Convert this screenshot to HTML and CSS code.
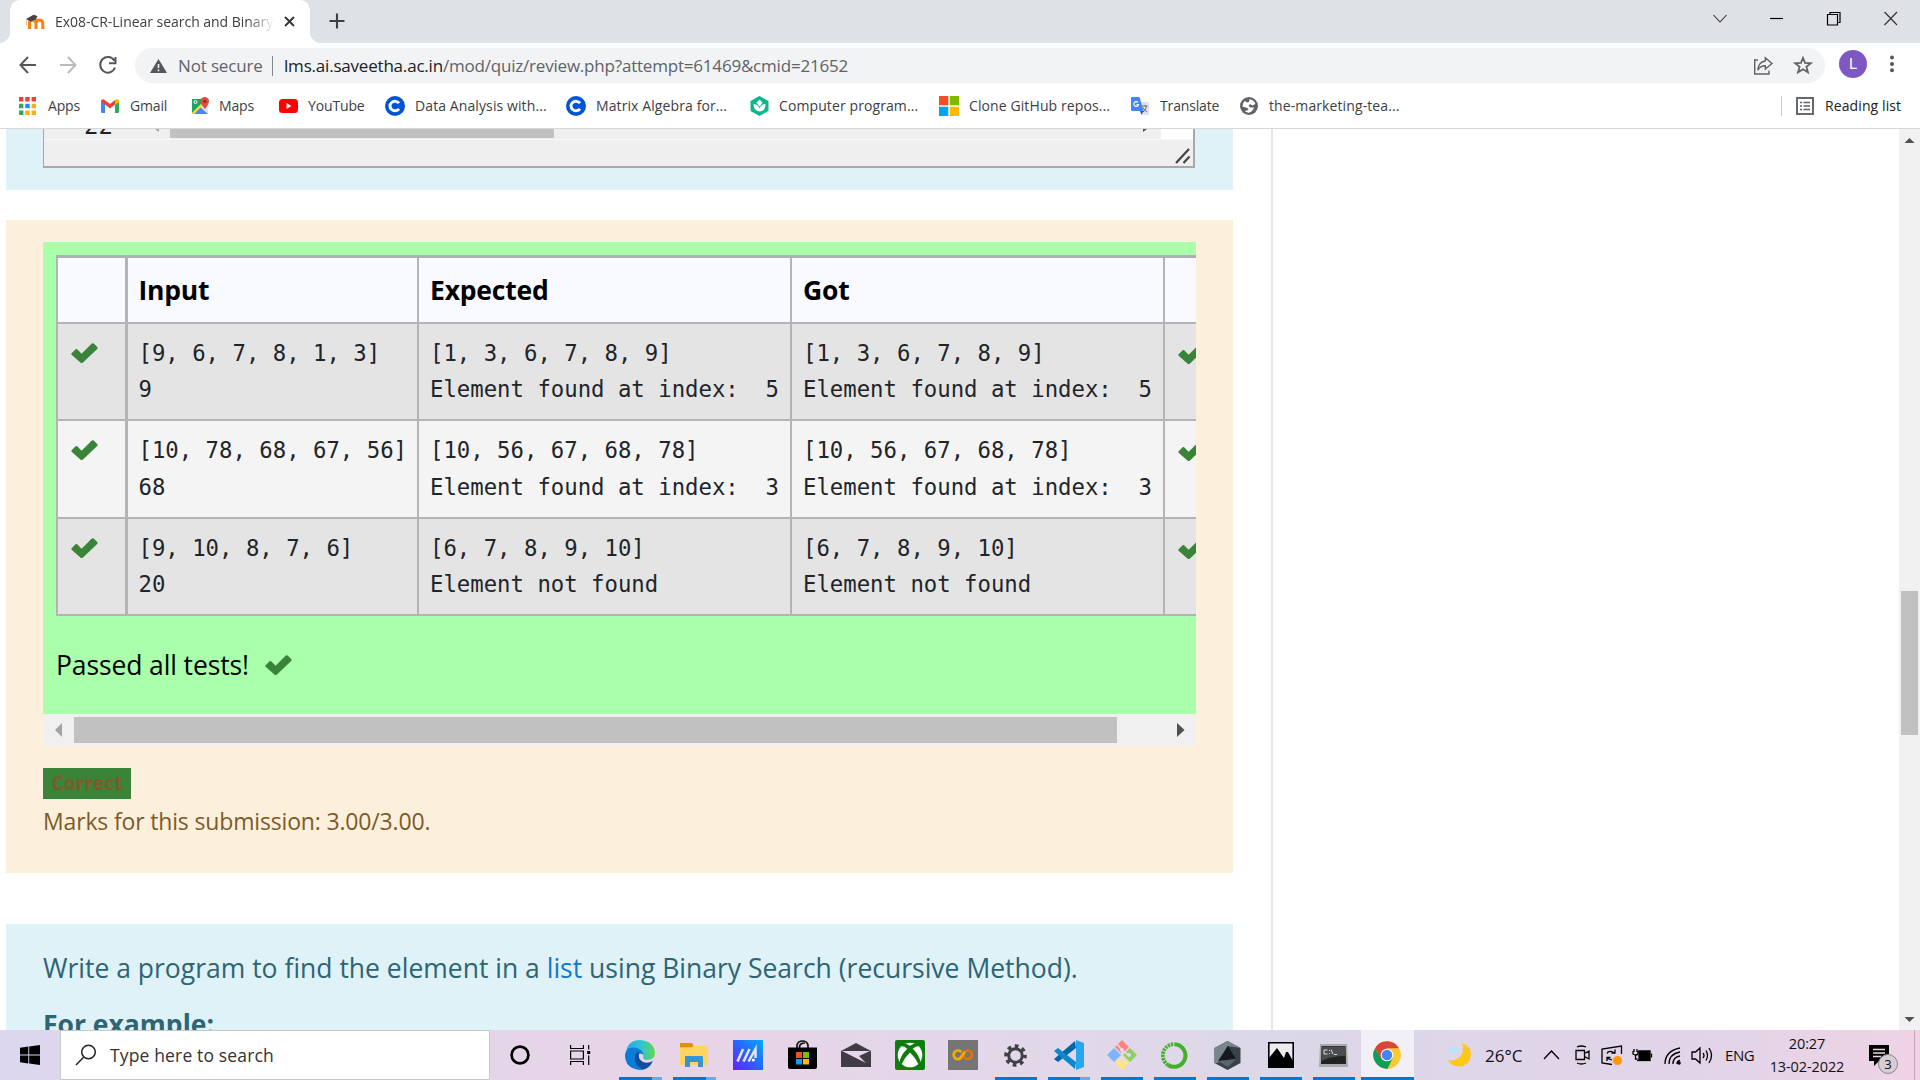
FILE: index.html
```html
<!DOCTYPE html>
<html lang="en">
<head>
<meta charset="utf-8">
<title>Ex08-CR-Linear search and Binary</title>
<link rel="stylesheet" href="styles.css">
</head>
<body>
<svg class="defs" aria-hidden="true">
  <symbol id="check" viewBox="0 0 27 20"><path d="M0.6 10.2 L4.6 6.2 Q5.4 5.6 6.2 6.3 L10.6 10.8 L20.8 0.6 Q21.8-.2 22.7.6 L26.2 4 Q27 5 26.2 5.9 L12 19.4 Q10.6 20.5 9.4 19.4 L.6 11.8 Q0 11 .6 10.2Z" fill="#398439"/></symbol>
  <symbol id="coursera" viewBox="0 0 20 20"><circle cx="10" cy="10" r="10" fill="#0056d2"/><path d="M14 7.2A5 4.7 0 1 0 14 12.8" fill="none" stroke="#fff" stroke-width="2.9"/></symbol>
</svg>

<header class="tabstrip">
  <div class="tab">
    <svg class="favicon" width="20" height="16" viewBox="0 0 20 16"><path d="M4.5 15V9Q4.5 6 7.5 6T11 9V15M11 9Q11 6 14.2 6T17.8 9V15" fill="none" stroke="#f98012" stroke-width="3"/><path d="M1 5 8.5.8 12.5 2 11 5.5 5.5 7.5Z" fill="#444"/><path d="M1.5 5V11" stroke="#f7b98a"/></svg>
    <span class="tab-title">Ex08-CR-Linear search and Binary</span>
    <svg class="tab-close" width="11" height="11" viewBox="0 0 11 11"><path d="M1 1 10 10M10 1 1 10" stroke="#333639" stroke-width="1.9"/></svg>
  </div>
  <svg class="newtab" width="16" height="16" viewBox="0 0 16 16"><path d="M8 .5V15.5M.5 8H15.5" stroke="#3c4043" stroke-width="2.1"/></svg>
  <div class="winbtns">
    <svg width="56" height="36"><path d="M21.5 15 28 22 34.5 15" fill="none" stroke="#333" stroke-width="1.1"/></svg>
    <svg width="57" height="36"><path d="M22 18.5H35" stroke="#000" stroke-width="1.2"/></svg>
    <svg width="57" height="36"><path d="M22.5 14.5H32.5V25H22.5ZM25 14V12.5H35V22.5H33" fill="none" stroke="#000" stroke-width="1.2"/></svg>
    <svg width="57" height="36"><path d="M22.5 12 35 25M35 12 22.5 25" stroke="#333" stroke-width="1.2"/></svg>
  </div>
</header>

<nav class="toolbar">
  <svg width="135" height="42" viewBox="0 0 135 42" fill="none" stroke-width="2">
    <path d="M36 22H20.5M28 14 20.5 22 28 30" stroke="#54585d"/>
    <path d="M60 22H75.5M68 14 75.5 22 68 30" stroke="#b9bbbd"/>
    <path d="M114.5 18A7.6 7.8 0 1 0 115 24.5M115.5 14V20.2H109" stroke="#54585d"/>
  </svg>
  <div class="omnibox">
    <svg class="warn" width="17" height="14" viewBox="0 0 17 14"><path d="M8.5 0 17 14H0Z" fill="#54585d"/><path d="M8.5 5V9M8.5 10.4V12.2" stroke="#f1f3f4" stroke-width="1.6"/></svg>
    <span class="notsecure">Not secure</span>
    <span class="omnisep"></span>
    <span class="url"><b>lms.ai.saveetha.ac.in</b>/mod/quiz/review.php?attempt=61469&amp;cmid=21652</span>
    <svg class="omni-icons" width="72" height="35" viewBox="0 0 72 35" fill="none" stroke="#5f6368">
      <path d="M5 12H1.7V26H16V22.5" stroke-width="1.4"/><path d="M12.3 9.8 19 15.5 12.3 21V17.8Q7 17.8 4.8 22.3 5.2 14 12.3 13Z" stroke-width="1.4"/>
      <path d="M50 9.8 52.1 15 57.8 15.3 53.4 18.8 54.9 24.3 50 21.2 45.1 24.3 46.6 18.8 42.2 15.3 47.9 15Z" stroke-width="1.8"/>
    </svg>
  </div>
  <span class="avatar">L</span>
  <svg class="kebab" width="6" height="18" viewBox="0 0 6 18" fill="#54585d"><circle cx="3" cy="2.6" r="2"/><circle cx="3" cy="9" r="2"/><circle cx="3" cy="15.2" r="2"/></svg>
</nav>

<nav class="bookmarks">
  <a class="bm bm-apps"><svg width="17" height="18" viewBox="0 0 17 18"><path d="M0 0h4.4v4.4H0zM6.3 0h4.4v4.4H6.3zM12.6 0H17v4.4h-4.4z" fill="#ea4335"/><path d="M0 6.8h4.4v4.4H0zM0 13.6h4.4V18H0z" fill="#34a853"/><path d="M6.3 6.8h4.4v4.4H6.3z" fill="#1a8cff"/><path d="M12.6 6.8H17v4.4h-4.4zM6.3 13.6h4.4V18H6.3zM12.6 13.6H17V18h-4.4z" fill="#fbb005"/></svg><span>Apps</span></a>
  <a class="bm bm-gmail"><svg width="18" height="14" viewBox="0 0 18 14"><path d="M0 2.5 4 5V14H1Q0 14 0 13Z" fill="#4285f4"/><path d="M18 2.5 14 5V14H17Q18 14 18 13Z" fill="#34a853"/><path d="M0 2.5Q.2-.6 3 .4L9 5 14 1V5.4L9 9.4 4 5.5 0 3Z" fill="#ea4335"/><path d="M14 1Q17.5-1.4 18 2.2V3L14 6Z" fill="#fbbc04"/></svg><span>Gmail</span></a>
  <a class="bm bm-maps"><svg width="18" height="18" viewBox="0 0 18 18"><path d="M1 2H11L17 8V17H1Z" fill="#dfe3e6"/><path d="M1 2H11L10 8 1 17Z" fill="#1ea362"/><path d="M9 10 17 17H3Z" fill="#4a89f3"/><path d="M1.5 17 11 7.5" stroke="#fdd835" stroke-width="2.4"/><path d="M14 12Q9.5 7 9.5 4.3A4 4 0 0 1 18 4.3Q18 7 14 12Z" fill="#e04a3f"/><circle cx="13.8" cy="4.2" r="1.5" fill="#8c2922"/><circle cx="4.5" cy="5" r="1.5" fill="none" stroke="#fff"/></svg><span>Maps</span></a>
  <a class="bm bm-yt"><svg width="19" height="14" viewBox="0 0 19 14"><rect width="19" height="14" rx="3.5" fill="#f00"/><path d="M7.5 4 12.5 7 7.5 10Z" fill="#fff"/></svg><span>YouTube</span></a>
  <a class="bm wide bm-data"><svg width="20" height="20"><use href="#coursera"/></svg><span>Data Analysis with...</span></a>
  <a class="bm wide bm-matrix"><svg width="20" height="20"><use href="#coursera"/></svg><span>Matrix Algebra for...</span></a>
  <a class="bm wide bm-comp"><svg width="19" height="20" viewBox="0 0 19 20"><path d="M9.5 0 18.5 5V15L9.5 20 .5 15V5Z" fill="#0fb58d"/><path d="M9.5 3.5 12.5 6.8 9.5 10.5 6.5 6.8ZM3.5 8Q8.5 8.3 9.5 12.5 10.5 8.3 15.5 8 15.5 15 9.5 15.5 3.5 15 3.5 8Z" fill="#fff"/></svg><span>Computer program...</span></a>
  <a class="bm wide bm-clone"><svg width="20" height="20" viewBox="0 0 20 20"><path d="M0 0h9.3v9.3H0z" fill="#f25022"/><path d="M10.7 0H20v9.3h-9.3z" fill="#7fba00"/><path d="M0 10.7h9.3V20H0z" fill="#00a4ef"/><path d="M10.7 10.7H20V20h-9.3z" fill="#ffb900"/></svg><span>Clone GitHub repos...</span></a>
  <a class="bm bm-trans"><svg width="18" height="18" viewBox="0 0 18 18"><path d="M7 5H17Q18 5 18 6V17Q18 18 17 18H10Z" fill="#dfe1e5"/><path d="M11 9H16.5M14 8V9M12 15Q15 13 15.5 9M12 10.5Q13 13.5 16 15" stroke="#6b7075" fill="none"/><path d="M1 0H8.5L12.5 14H1.5Q0 14 0 13V1Q0 0 1 0Z" fill="#4285f4"/><path d="M9 14H13L10.3 17.5Z" fill="#3451b8"/><path d="M7 5.3A2.4 2.4 0 1 0 7.6 7.6H5.5" fill="none" stroke="#fff" stroke-width="1.1"/></svg><span>Translate</span></a>
  <a class="bm wide bm-mark"><svg width="18" height="18" viewBox="0 0 18 18"><circle cx="9" cy="9" r="9" fill="#5f6368"/><path d="M9.5 2.2Q14 2.6 15.4 7L12.5 8.5 10 7 8.5 9 10.5 10.5H14Q12.5 14.8 9 15.8 6.5 15.7 4.8 14L8.5 13 7.5 11 2.4 9.5Q2.3 6 5 3.8L6.5 5.5 9 5Z" fill="#fff"/></svg><span>the-marketing-tea...</span></a>
  <a class="reading"><svg width="18" height="18" viewBox="0 0 18 18"><rect x="1" y="1" width="16" height="16" fill="none" stroke="#5f6368" stroke-width="1.9"/><path d="M4 5.5H6M4 9H6M4 12.5H6M7.5 5.5H14M7.5 9H14M7.5 12.5H14" stroke="#5f6368" stroke-width="1.7"/></svg><span>Reading list</span></a>
</nav>

<main class="viewport">
  <section class="column">
    <div class="box info-top">
      <div class="editor">
        <div class="editor-row">
          <span class="lineno">22</span>
          <svg class="ed-left" width="5" height="4" viewBox="0 0 5 4"><path d="M0 0H4V3Z" fill="#a3a3a3"/></svg>
          <span class="ed-thumb"></span>
          <svg class="ed-right" width="5" height="4" viewBox="0 0 5 4"><path d="M1 0H5L1 3Z" fill="#505050"/></svg>
          <span class="ed-corner"></span>
        </div>
        <svg class="resizer" width="16" height="16" viewBox="0 0 16 16"><path d="M1 15 14 1M8.5 15 14.5 8.5" stroke="#444" stroke-width="2.2"/></svg>
      </div>
    </div>

    <div class="box outcome">
      <div class="results">
        <table class="tests">
          <colgroup><col class="c-mark"><col class="c-input"><col class="c-exp"><col class="c-got"><col class="c-mark2"></colgroup>
          <thead><tr><th></th><th>Input</th><th>Expected</th><th>Got</th><th></th></tr></thead>
          <tbody>
            <tr><td><svg class="ck" width="27" height="20"><use href="#check"/></svg></td><td><pre>[9, 6, 7, 8, 1, 3]
9</pre></td><td><pre>[1, 3, 6, 7, 8, 9]
Element found at index:  5</pre></td><td><pre>[1, 3, 6, 7, 8, 9]
Element found at index:  5</pre></td><td><svg class="ck ck-last" width="27" height="20"><use href="#check"/></svg></td></tr>
            <tr><td><svg class="ck" width="27" height="20"><use href="#check"/></svg></td><td><pre>[10, 78, 68, 67, 56]
68</pre></td><td><pre>[10, 56, 67, 68, 78]
Element found at index:  3</pre></td><td><pre>[10, 56, 67, 68, 78]
Element found at index:  3</pre></td><td><svg class="ck ck-last" width="27" height="20"><use href="#check"/></svg></td></tr>
            <tr><td><svg class="ck" width="27" height="20"><use href="#check"/></svg></td><td><pre>[9, 10, 8, 7, 6]
20</pre></td><td><pre>[6, 7, 8, 9, 10]
Element not found</pre></td><td><pre>[6, 7, 8, 9, 10]
Element not found</pre></td><td><svg class="ck ck-last" width="27" height="20"><use href="#check"/></svg></td></tr>
          </tbody>
        </table>
        <p class="passed"><span>Passed all tests!</span><svg width="27" height="20"><use href="#check"/></svg></p>
      </div>
      <div class="hscroll">
        <svg width="31" height="32"><path d="M19 9V23L12 16Z" fill="#a3a3a3"/></svg>
        <span class="hthumb"></span>
        <svg width="31" height="32"><path d="M12 9V23L19.5 16Z" fill="#505050"/></svg>
      </div>
      <span class="badge">Correct</span>
      <p class="marks">Marks for this submission: 3.00/3.00.</p>
    </div>

    <div class="box question">
      <p class="prompt">Write a program to find the element in a <a>list</a> using Binary Search (recursive Method).</p>
      <p class="example">For example:</p>
    </div>
  </section>
  <aside class="side"></aside>
  <div class="vscroll">
    <svg width="21" height="20"><path d="M5.5 14 10.5 9 15.5 14Z" fill="#505050"/></svg>
    <span class="vthumb"></span>
    <svg width="21" height="20"><path d="M5.5 7 10.5 12 15.5 7Z" fill="#505050"/></svg>
  </div>
</main>

<footer class="taskbar">
  <div class="start"><svg width="20" height="20" viewBox="0 0 20 20"><path d="M0 2.8 8.3 1.6V9.5H0ZM9.2 1.5 20 0V9.5H9.2ZM0 10.4H8.3V18.4L0 17.2ZM9.2 10.4H20V20L9.2 18.5Z"/></svg></div>
  <div class="search"><svg width="22" height="22" viewBox="0 0 22 22"><circle cx="13.5" cy="8" r="6.8" fill="none" stroke="#222" stroke-width="1.5"/><path d="M8.6 13.2 1 21" stroke="#222" stroke-width="1.5"/></svg><span>Type here to search</span></div>
  <div class="sys"><svg width="20" height="20" viewBox="0 0 20 20"><circle cx="10" cy="10" r="8.4" fill="none" stroke="#000" stroke-width="2.7"/></svg></div>
  <div class="sys sys2"><svg width="21" height="20" viewBox="0 0 21 20" fill="none" stroke="#000" stroke-width="1.2"><path d="M.6 0V3.5H13.4V0M.6 20V16.5H13.4V20M.6 6H13.4V14H.6ZM18.7 0V4.5M18.7 10.5V20"/><path d="M17.2 6H20.2V9H17.2Z" fill="#000" stroke="none"/></svg></div>

  <div class="app run two"><svg width="30" height="30" viewBox="0 0 30 30"><defs><linearGradient id="eg" x1="0" x2="1"><stop offset="0" stop-color="#28a8e8"/><stop offset=".55" stop-color="#30c5cf"/><stop offset="1" stop-color="#62d94b"/></linearGradient></defs><path d="M1 12Q3 0 15 0 29 1 30 13 30 20 22 20 18 20 18 17 20 12 14 9 7 6 1 12Z" fill="url(#eg)"/><path d="M0 15Q1 7 9 7.5 17 8 19 15 14 11 11 17 10 25 19 28 22 28.5 20 29 16 30.5 12 29.6 0 27 0 15Z" fill="#0a7cd8"/><path d="M10 16Q11 12 14.5 12 12 19 18 22 23 24 28 21 24 29 18 29.5 9 26 10 16Z" fill="#104f9c"/></svg></div>
  <div class="app run two"><svg width="28" height="24" viewBox="0 0 28 24"><path d="M0 2Q0 0 2 0H11L14 3H26Q28 3 28 5V21H0Z" fill="#f5bd3c"/><path d="M0 1Q0 0 1 0H12L13.5 2 12 4H0Z" fill="#dc9500"/><path d="M0 5H12L14 3H28V22H0Z" fill="#ffd560"/><path d="M5 24V14Q5 13 6 13H22Q23 13 23 14V24H18V19H10V24Z" fill="#3991d9"/></svg></div>
  <div class="app"><svg width="30" height="30" viewBox="0 0 30 30"><defs><linearGradient id="ag" x1="0" y1="1" x2="1" y2="0"><stop offset="0" stop-color="#6420ff"/><stop offset=".5" stop-color="#2b64ff"/><stop offset="1" stop-color="#00abff"/></linearGradient></defs><path d="M0 0H30V30H0Z" fill="url(#ag)"/><path d="M4.5 21.5 10 9M10.5 21.5 16.5 9M15.5 21.5 22.5 9V18" fill="none" stroke="#e3eaff" stroke-width="2.5"/><circle cx="20.3" cy="20" r="1.6" fill="#fff"/></svg></div>
  <div class="app"><svg width="29" height="30" viewBox="0 0 29 30"><path d="M9 8V5Q10 1 14.5 1T20 5V8M11.5 8Q11 3 17 3" fill="none" stroke="#111" stroke-width="1.7"/><path d="M0 7.5H29V27Q29 29 27 29H2Q0 29 0 27Z"/><path d="M8 12h6v6H8z" fill="#f25022"/><path d="M15 12h6v6h-6z" fill="#7fba00"/><path d="M8 19h6v5.5H8z" fill="#00a4ef"/><path d="M15 19h6v5.5h-6z" fill="#ffb900"/></svg></div>
  <div class="app"><svg width="30" height="24" viewBox="0 0 30 24"><path d="M0 8 15 0 30 8V24H0Z" fill="#403c44"/><path d="M1 8H29L18 13 25 20 13 14Z" fill="#e5d6e9"/></svg></div>
  <div class="app"><svg width="30" height="30" viewBox="0 0 30 30"><rect width="30" height="30" rx="2" fill="#107c10"/><circle cx="15" cy="15" r="12.3" fill="#fff"/><path d="M7 3.5Q11.5 3 15 5.8 18.5 3 23 3.5L24.5 6Q20.5 6 17.7 8.7 24.5 15 25.3 22L23.6 24.5Q20 17 15 12.5 10 17 6.4 24.5L4.7 22Q5.5 15 12.3 8.7 9.5 6 5.5 6Z" fill="#107c10"/></svg></div>
  <div class="app n"><svg width="30" height="30" viewBox="0 0 30 30"><path d="M0 0H30V30H0Z" fill="#757575"/><g fill="none" stroke-width="2.7"><path d="M13.2 12A4.3 4.3 0 1 0 13.2 17.6" stroke="#f9ab00"/><circle cx="19.7" cy="14.8" r="4.2" stroke="#e8710a"/><path d="M12.2 18.2 16.8 11.8" stroke="#f9ab00"/></g></svg></div>
  <div class="app n run"><svg width="23" height="23" viewBox="0 0 23 23"><circle cx="11.5" cy="11.5" r="6.8" fill="none" stroke="#414046" stroke-width="3"/><circle cx="11.5" cy="11.5" r="9.4" fill="none" stroke="#414046" stroke-width="3.8" stroke-dasharray="3.7 3.68" stroke-dashoffset="1"/></svg></div>
  <div class="app n run two"><svg width="30" height="30" viewBox="0 0 30 30"><path d="M22 8 4 22 0 19 21 1Z" fill="#0065a9"/><path d="M22 22 4 8 0 11 21 29Z" fill="#0b86cf"/><path d="M22 0 30 3V27L22 30Z" fill="#2aa5f0"/></svg></div>
  <div class="app n run"><svg width="30" height="30" viewBox="0 0 30 30"><path d="M15 0 22 7 15 14 8 7Z" fill="#ff8080"/><path d="M23 8 30 15 23 22 16 15Z" fill="#8ccf63"/><path d="M7 8 14 15 7 22 0 15Z" fill="#80b3ff"/><path d="M15 16 22 23 15 30 8 23Z" fill="#ffe680"/><path d="M10 4 15 10V22M15 11 22 15" fill="none" stroke="#e4dbe9" stroke-width="1.7"/><circle cx="15" cy="10" r="2" fill="#e4dbe9"/><circle cx="15" cy="21" r="2" fill="#e4dbe9"/><circle cx="22" cy="15" r="2" fill="#e4dbe9"/></svg></div>
  <div class="app n run"><svg width="27" height="27" viewBox="0 0 27 27" fill="none" stroke="#43b02a"><path d="M13.5 2.2A11.3 11.3 0 1 1 7 23" stroke-width="4"/><path d="M7 23A11.3 11.3 0 0 1 13.5 2.2" stroke-width="3.8" stroke-dasharray="2.3 .9"/></svg></div>
  <div class="app n run"><svg width="27" height="29" viewBox="0 0 27 29"><path d="M13.5 0 26.5 7V22L13.5 29 .5 22V7Z" fill="#39424a"/><path d="M13.5 0 26.5 7 13.5 5 4 22 .5 22V7Z" fill="#78858d"/><path d="M14 5 22 18 4 20Z" fill="#15191d"/><path d="M4 20 22 18 14 26Z" fill="#59636b"/></svg></div>
  <div class="app n run"><svg width="26" height="26" viewBox="0 0 26 26"><path d="M.8.8H25.2V25.2H.8Z" fill="#efe9f2" stroke="#000" stroke-width="1.6"/><path d="M1 16 9 6 16 16 18 10 20 10 25 19V25H1Z"/></svg></div>
  <div class="app n run"><svg width="29" height="23" viewBox="0 0 29 23"><path d="M1 0H28L29 23H0Z" fill="#aaa"/><path d="M2.5 2H26.5L27 20H2Z" fill="#202224"/><path d="M3 2.5H26L26.3 12Q12 12 2.6 17Z" fill="#4a4d50"/><path d="M8.5 6H5V10H8.5M10.5 6V7M10.5 9V10M12 5.5 14 10M15 10.5H18" fill="none" stroke="#ddd"/></svg></div>
  <div class="app n run active"><svg width="28" height="28" viewBox="0 0 28 28"><circle cx="14" cy="14" r="13.7" fill="#fcc934"/><path d="M2 7.3A13.7 13.7 0 0 1 26 7.3H14L8 17.5Z" fill="#db4437"/><path d="M2 7.3 8.2 17.5 14 20 14.8 27.6A13.7 13.7 0 0 1 2 7.3Z" fill="#0f9d58"/><path d="M20 17 14.5 27.7 10 25 15 19Z" fill="#0f9d58"/><path d="M20 17 15 27.7A13.7 13.7 0 0 0 26.5 8.5H16Z" fill="#fcc934"/><circle cx="14" cy="14" r="6.3" fill="#fff"/><circle cx="14" cy="14" r="5.2" fill="#4285f4"/></svg></div>

  <div class="tray">
    <svg class="moon" width="26" height="24" viewBox="0 0 26 24"><path d="M16 0Q25 3 25 12 24 23 13 23.5 5 23 2 17 8 18.5 13.5 14.5 19 8 16 0Z" fill="#fdc81c"/><path d="M3 10A3 3 0 0 1 4 5Q7 0 10 5 14 6 12 10Z" fill="#bfe1f7"/></svg>
    <span class="temp">26°C</span>
    <svg class="ticons" width="170" height="30" viewBox="0 0 170 30" fill="none" stroke="#000" stroke-width="1.3">
      <path d="M1 19 8.5 11 16 19"/>
      <path d="M33 10.5H41.5V19.5H33ZM41.5 13.5 46 11V19L41.5 16.5M34 7Q38 5 43 7M34 23Q38 25 43 23"/>
      <path d="M78.5 14V6L59 9V23L69 24.5M64 13.5Q65 11 68 11.5L71.5 12.8M72 9.5V13H68.5M64 21V17.5H67.5M64.5 18.5 69 20"/><circle cx="74.5" cy="20.5" r="4.5" fill="#ff9800" stroke="none"/>
      <path d="M90 11V14Q93 16 95 14V11M91 9V12M94 9V12M92.5 15V19H94.5M108.5 13.5V17.5"/><path d="M96 11H107V20H96Z" fill="#000"/><path d="M94 20.5H107.5" />
      <path d="M122 24Q122 11 137 8M126 24Q126 14 137 12M130 24Q130 17 137 16M134 24Q134 21 137 20.5"/><circle cx="136" cy="23" r="1.8" fill="#000" stroke="none"/>
      <path d="M149 12H152.5L157 8V23L152.5 19H149ZM160 13Q162 15.5 160 18M163 10.5Q166 15.5 163 20.5M166 8Q171 15.5 166 23"/>
    </svg>
    <span class="lang">ENG</span>
    <span class="clock"><span class="time">20:27</span><span class="date">13-02-2022</span></span>
    <div class="notif"><svg width="20" height="21" viewBox="0 0 20 21"><path d="M0 0H20V16H10L5 21V16H0Z"/><path d="M4 4.5H16M4 8H16M4 11.5H12" stroke="#ead5e6" stroke-width="1.3"/></svg><span class="count">3</span></div>
  </div>
</footer>
</body>
</html>
```
FILE: styles.css
```css
* { box-sizing: border-box; }
html, body { margin: 0; height: 100%; overflow: hidden; }
body {
  width: 1920px; height: 1080px;
  display: flex; flex-direction: column;
  background: #fff; color: #3c4043;
  font-family: "Segoe UI", "Open Sans", "Noto Sans", sans-serif;
}
p { margin: 0; }
svg { display: block; flex: none; }
span, p, b, a { white-space: nowrap; }
.defs { position: absolute; width: 0; height: 0; }

/* tab strip */
.tabstrip { height: 43px; flex: none; display: flex; align-items: flex-start; background: #dee1e6; padding-left: 10px; }
.tab { position: relative; width: 300px; height: 43px; padding: 0 15px; background: #fff; border-radius: 10px 10px 0 0; display: flex; align-items: center; }
.tab::before, .tab::after { content: ""; position: absolute; bottom: 0; width: 10px; height: 10px; }
.tab::before { left: -10px; background: radial-gradient(circle at 0 0, transparent 9.5px, #fff 10px); }
.tab::after { right: -10px; background: radial-gradient(circle at 100% 0, transparent 9.5px, #fff 10px); }
.tab-title { width: 219px; margin: -1px 0 0 10px; overflow: hidden; font-size: 14px; letter-spacing: -.03px; -webkit-mask-image: linear-gradient(90deg, #000 88%, transparent); mask-image: linear-gradient(90deg, #000 88%, transparent); }
.tab-close { margin-left: 10px; }
.newtab { margin: 13px 0 0 19px; }
.winbtns { display: flex; margin-left: auto; margin-right: 1px; }

/* toolbar */
.toolbar { height: 42px; flex: none; display: flex; align-items: center; }
.omnibox { width: 1690px; height: 35px; margin-top: 3px; border-radius: 18px; background: #f1f3f4; display: flex; align-items: center; padding-left: 15px; color: #5f6368; font-size: 17px; }
.notsecure { width: 94px; margin-left: 11px; letter-spacing: -.15px; }
.omnisep { width: 1px; height: 20px; margin-right: 11px; background: #80868b; }
.url { letter-spacing: -.2px; }
.url b { font-weight: 400; color: #202124; }
.omni-icons { margin-left: auto; }
.avatar { width: 28px; height: 28px; margin-left: 14px; border-radius: 50%; background: #7e57c2; color: #fff; font: 15px/28px Roboto, sans-serif; text-align: center; }
.kebab { margin-left: 22px; }

/* bookmarks */
.bookmarks { height: 44px; flex: none; display: flex; align-items: center; padding: 0 0 1px 19px; border-bottom: 1px solid #d5d7da; font-size: 14px; letter-spacing: -.15px; }
.bookmarks span { margin-top: -2px; }
.bm { display: flex; align-items: center; gap: 11px; }
.wide { letter-spacing: .1px; }
.bm-apps { width: 82px; gap: 12px; }
.bm-gmail { width: 90px; }
.bm-maps { width: 88px; gap: 10px; }
.bm-yt { width: 106px; gap: 10px; }
.bm-data { width: 181px; gap: 10px; }
.bm-matrix { width: 184px; gap: 10px; }
.bm-comp { width: 189px; gap: 10px; }
.bm-clone { width: 192px; gap: 10px; }
.bm-trans { width: 109px; }
.reading { display: flex; align-items: center; gap: 11px; height: 20px; margin-left: auto; width: 139px; padding-left: 14px; border-left: 1px solid #c8cacd; color: #202124; letter-spacing: .1px; }

/* page */
.viewport { height: 901px; flex: none; display: flex; overflow: hidden; }
.column { width: 1271px; padding-left: 6px; }
.side { flex: 1; border-left: 2px solid #e3e5e8; }
.box { width: 1227px; padding: 0 37px; }
.info-top { height: 61px; background: #def2f8; }
.editor { height: 39px; width: 1152px; border: 1px solid #a9a9a9; border-top: 0; border-width: 0 2px 2px 1px; background: #efefef; }
.editor-row { height: 11px; display: flex; border-bottom: 1px solid #f7f7f7; overflow: hidden; }
.lineno { width: 70px; padding-left: 40px; font: 24px/9px "DejaVu Sans Mono", monospace; color: #222; margin-top: -7px; }
.ed-left { margin-left: 41px; }
.ed-thumb { width: 384px; height: 9px; margin-left: 10px; background: #c1c1c1; }
.ed-right { margin-left: 588px; }
.ed-corner { width: 32px; height: 11px; margin-left: auto; background: #fff; }
.resizer { margin: 8px 2px 0 auto; }

.outcome { height: 653px; margin-top: 30px; padding-top: 22px; background: #fcefdc; color: #7d5a29; }
.results { width: 1153px; height: 472px; padding: 13px 0 0 13px; background: #aaffaa; color: #000; overflow: hidden; }
.tests { width: 1181px; border-collapse: collapse; table-layout: fixed; border: 2px solid #b0b0b0; border-top-width: 3px; }
.c-mark { width: 69px; } .c-input { width: 292px; } .c-exp { width: 373px; } .c-got { width: 373px; }
.tests th, .tests td { border: 2px solid #b4b4b4; text-align: left; padding: 0 0 0 11px; }
.tests th:first-child, .tests td:first-child { border-right-width: 3px; }
.tests th { height: 66px; background: #f8faff; font-size: 26.5px; letter-spacing: -.2px; font-weight: 700; }
.tests td { height: 97.5px; vertical-align: top; color: #212529; background: #e4e4e4; }
.tests tr:nth-child(2) td { background: #f4f4f4; }
.tests pre { margin: 11px 0 0; font: 22.3px/36.7px "DejaVu Sans Mono", monospace; }
.tests .ck { margin: 19px 0 0 2px; }
.tests .ck-last { margin-top: 20px; }
.passed { display: flex; align-items: center; margin-top: 30px; height: 37px; font-size: 26.5px; }
.passed span { width: 209px; letter-spacing: -.12px; }
.hscroll { width: 1153px; height: 32px; display: flex; align-items: center; background: #f0f0f0; }
.hthumb { width: 1043px; height: 26px; background: #c1c1c1; }
.hscroll svg:last-child { margin-left: auto; }
.badge { display: block; width: 88px; height: 31px; margin-top: 22px; background: #398439; font-size: 19.5px; line-height: 30px; font-weight: 700; text-align: center; letter-spacing: -.2px; }
.marks { margin-top: 5px; font-size: 23px; line-height: 34px; letter-spacing: -.16px; }
.question { height: 200px; margin-top: 51px; padding-top: 25px; background: #def2f8; color: #2f6473; font-size: 26.5px; line-height: 38px; }
.question a { color: #1177d1; }
.example { margin-top: 18px; font-weight: 700; }

.vscroll { width: 21px; display: flex; flex-direction: column; align-items: center; background: #f1f1f1; }
.vthumb { width: 17px; height: 144px; margin: 442px 0 auto; background: #c1c1c1; }

/* taskbar */
.taskbar { height: 50px; flex: none; display: flex; color: #111; background: linear-gradient(90deg, #dcd6ee 0, #e5d5e9 24%, #e8d4e7 36%, #e2d8ea 55%, #dcd8e8 66%, #ddd6e9 73%, #e0d5e8 82%, #e3d4e8 90%, #efd3e5 100%); }
.start { width: 60px; display: flex; align-items: center; padding-left: 20px; }
.search { width: 430px; border: 1px solid #c8c8c8; background: #fff; display: flex; align-items: center; padding-left: 14px; gap: 13px; font-size: 17.5px; letter-spacing: .15px; color: #333; }
.sys { width: 70px; padding-left: 20px; display: flex; align-items: center; }
.sys2 { width: 53px; padding-left: 10px; }
.app { position: relative; width: 54px; display: flex; align-items: center; justify-content: center; }
.n { width: 53px; padding-right: 2px; }
.run::after { content: ""; position: absolute; left: 6px; right: 5px; bottom: 0; height: 3px; background: #0078d7; }
.n.run::after { left: 5px; right: 6px; }
.two::after, .n.two::after { background: linear-gradient(90deg, #0078d7 76%, #66ade6 76%); }
.active { background: #f3eff6; }
.active.run::after { left: 0; right: 0; }
.tray { flex: 1; display: flex; align-items: center; }
.moon { margin-left: 32px; }
.temp { width: 58px; margin-left: 13px; font-size: 17px; }
.ticons { margin-top: -1px; }
.lang { width: 43px; margin-left: 12px; font-size: 15px; letter-spacing: -.4px; }
.clock { width: 78px; display: flex; flex-direction: column; align-items: center; font-size: 14.5px; line-height: 23px; letter-spacing: -.1px; }
.notif { position: relative; width: 46px; margin-left: 23px; height: 20px; }
.notif::after { content: ""; position: absolute; right: 0; top: -15px; height: 50px; border-left: 1px solid #bda9bb; }
.count { position: absolute; left: 9px; top: 9px; width: 20px; height: 20px; border: 1px solid #888; border-radius: 50%; background: #d6cdd6; font-size: 13px; line-height: 18px; text-align: center; }
```
